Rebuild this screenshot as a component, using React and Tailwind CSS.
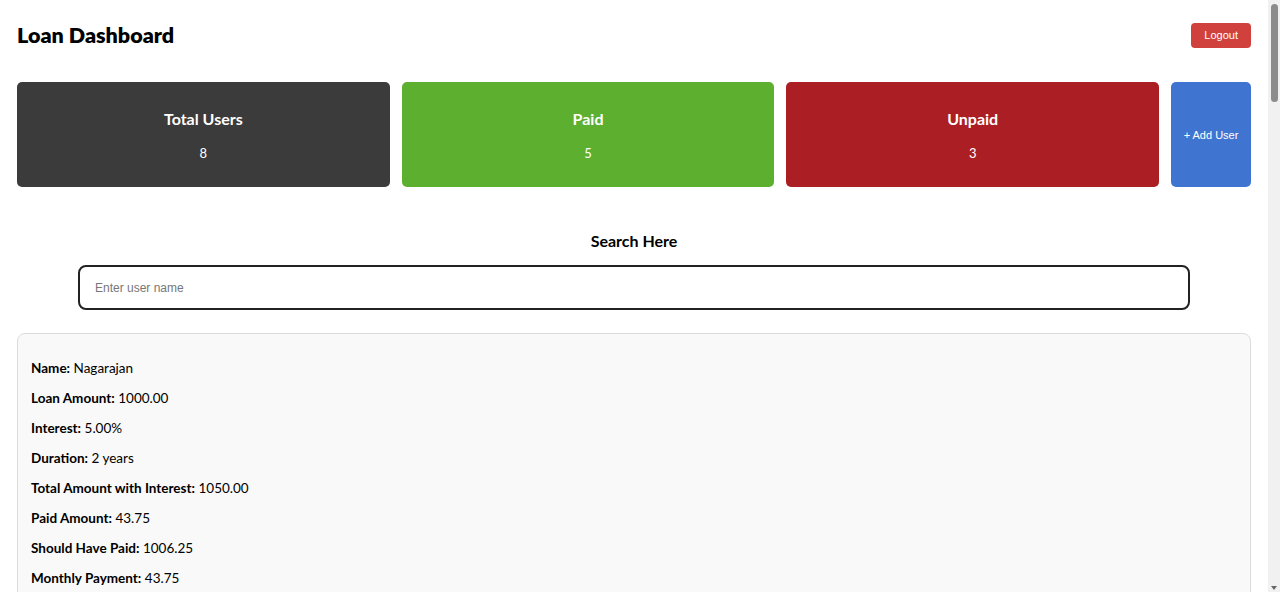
export default function App() {
  const rows = [
    ["Name:", "Nagarajan"],
    ["Loan Amount:", "1000.00"],
    ["Interest:", "5.00%"],
    ["Duration:", "2 years"],
    ["Total Amount with Interest:", "1050.00"],
    ["Paid Amount:", "43.75"],
    ["Should Have Paid:", "1006.25"],
    ["Monthly Payment:", "43.75"],
  ];
  return (
    <div className="flex h-[592px] overflow-hidden bg-white text-black" style={{ fontFamily: "Lato, 'Noto Sans', sans-serif" }}>
      <div className="flex-1 px-[17px]">
        <div className="flex items-center justify-between pt-[23px]">
          <h1 className="text-[21.5px] font-extrabold leading-[25px]">Loan Dashboard</h1>
          <button className="h-[25px] rounded-[4px] bg-[#d0413d] px-[13px] text-[11px] text-white" style={{ fontFamily: "'Liberation Sans', Arial, sans-serif" }}>
            Logout
          </button>
        </div>
        <div className="mt-[34px] flex h-[105px] gap-[12px]">
          <div className="flex flex-1 flex-col items-center justify-center rounded-[5px] bg-[#3b3b3b] pt-[2px] text-white">
            <div className="text-[16px] font-bold">Total Users</div>
            <div className="mt-[13px] text-[13px]">8</div>
          </div>
          <div className="flex flex-1 flex-col items-center justify-center rounded-[5px] bg-[#5daf2f] pt-[2px] text-white">
            <div className="text-[16px] font-bold">Paid</div>
            <div className="mt-[13px] text-[13px]">5</div>
          </div>
          <div className="flex flex-1 flex-col items-center justify-center rounded-[5px] bg-[#ab1e23] pt-[2px] text-white">
            <div className="text-[16px] font-bold">Unpaid</div>
            <div className="mt-[13px] text-[13px]">3</div>
          </div>
          <button className="w-[80px] rounded-[5px] bg-[#3f75d0] pt-[2px] text-[11px] text-white" style={{ fontFamily: "'Liberation Sans', Arial, sans-serif" }}>
            + Add User
          </button>
        </div>
        <div className="mt-[42px] text-center text-[16px] font-bold">Search Here</div>
        <div className="mt-[12px] flex justify-center">
          <input
            className="h-[45px] w-[1112px] rounded-[8px] border-2 border-[#222] px-[15px] text-[12px] outline-none placeholder:text-[#777]"
            style={{ fontFamily: "'Liberation Sans', Arial, sans-serif" }}
            placeholder="Enter user name"
          />
        </div>
        <div className="mt-[23px] rounded-[8px] border border-[#dcdcdc] bg-[#f9f9f9] px-[13px] pt-[25px] pb-[20px]">
          {rows.map(([k, v]) => (
            <div key={k} className="mb-[12px] text-[13.5px] leading-[18px]">
              <span className="font-bold">{k}</span> {v}
            </div>
          ))}
        </div>
      </div>
      <div className="flex w-[12px] flex-col items-center bg-[#f1f1f1] pt-[4px]">
        <div className="h-[98px] w-[7px] rounded-full bg-[#8c8c8c]"></div>
        <div className="flex-1"></div>
        <div className="mb-[2px] h-0 w-0 border-x-[3px] border-t-[4px] border-x-transparent border-t-[#666]"></div>
      </div>
    </div>
  );
}
